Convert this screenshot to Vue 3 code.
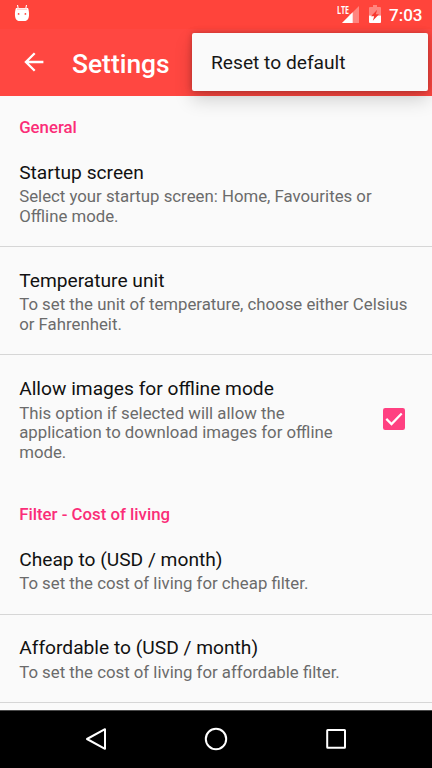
<script setup>
const groups = [
  {
    title: 'General',
    items: [
      {
        title: 'Startup screen',
        lines: ['Select your startup screen: Home, Favourites or', 'Offline mode.'],
      },
      {
        title: 'Temperature unit',
        lines: ['To set the unit of temperature, choose either Celsius', 'or Fahrenheit.'],
      },
      {
        title: 'Allow images for offline mode',
        lines: ['This option if selected will allow the', 'application to download images for offline', 'mode.'],
        checked: true,
      },
    ],
  },
  {
    title: 'Filter - Cost of living',
    items: [
      { title: 'Cheap to (USD / month)', lines: ['To set the cost of living for cheap filter.'] },
      { title: 'Affordable to (USD / month)', lines: ['To set the cost of living for affordable filter.'] },
    ],
  },
]
</script>

<template>
  <div class="screen">
    <header class="header">
      <div class="status">
        <svg class="droid" width="16" height="18" viewBox="0 0 16 18">
          <path d="M4.2 4.5L3.5 1M11.8 4.5L12.5 1" stroke="#fff" stroke-width="1.1" fill="none" />
          <path d="M2 4H14C14.8 6 15.2 8.5 15 11.5C14.8 15.3 12.8 17 10.5 17H5.5C3.2 17 1.2 15.3 1 11.5C.8 8.5 1.2 6 2 4Z" fill="#fff" />
          <path d="M3 5.2H13" stroke="#ff9a93" stroke-width=".6" />
          <circle cx="4.6" cy="9.9" r=".9" fill="#ff453d" />
          <circle cx="11.4" cy="9.9" r=".9" fill="#ff453d" />
        </svg>
        <div class="indicators">
          <div class="network">
            <span class="lte">LTE</span>
            <svg class="signal" width="17" height="17" viewBox="0 0 17 17">
              <path d="M17 0V17H0L7.5 9.5V8H9Z" fill="#fff" fill-opacity=".35" />
              <path d="M10.7 6.3V17H0Z" fill="#fff" />
            </svg>
          </div>
          <svg class="battery" width="12" height="18" viewBox="0 0 12 18">
            <path d="M4 0H8V2H11A1 1 0 0 1 12 3V10.5H0V3A1 1 0 0 1 1 2H4Z" fill="#fff" fill-opacity=".35" />
            <path d="M0 10.5H12V17A1 1 0 0 1 11 18H1A1 1 0 0 1 0 17Z" fill="#fff" />
            <path d="M8.2 4.8L2 11.3H5.2L3.8 15.7L10 9.2H6.8Z" fill="#f8382f" />
          </svg>
          <span class="time">7:03</span>
        </div>
      </div>
      <div class="toolbar">
        <svg class="back" width="20" height="20" viewBox="0 0 20 20">
          <path d="M19.4 10H2M10.7 1.2L1.9 10L10.7 18.8" fill="none" stroke="#fff" stroke-width="2.3" />
        </svg>
        <h1 class="heading">Settings</h1>
      </div>
    </header>

    <div class="menu">Reset to default</div>

    <main class="list">
      <section v-for="group in groups" :key="group.title" class="group">
        <h2 class="category">{{ group.title }}</h2>
        <div v-for="item in group.items" :key="item.title" class="item">
          <div class="copy">
            <div class="title">{{ item.title }}</div>
            <div v-for="line in item.lines" :key="line" class="summary">{{ line }}</div>
          </div>
          <svg v-if="item.checked" class="checkbox" width="22" height="22" viewBox="0 0 22 22">
            <rect width="22" height="22" rx="2.2" fill="#ff4081" />
            <path d="M3.3 10.9L8.5 16.1L18.7 5.4" fill="none" stroke="#fff" stroke-width="2.2" />
          </svg>
        </div>
      </section>
    </main>

    <nav class="navbar">
      <svg width="24" height="26" viewBox="0 0 24 26">
        <path d="M21 3.2V22.8L3 13Z" fill="none" stroke="#fff" stroke-width="2" stroke-linejoin="round" />
      </svg>
      <svg width="24" height="26" viewBox="0 0 24 26">
        <circle cx="12" cy="13" r="10.2" fill="none" stroke="#fff" stroke-width="2" />
      </svg>
      <svg width="24" height="26" viewBox="0 0 24 26">
        <rect x="3.2" y="4" width="17.8" height="17.8" rx=".5" fill="none" stroke="#fff" stroke-width="2" />
      </svg>
    </nav>
  </div>
</template>

<style>
body {
  margin: 0;
  overflow: hidden;
}
</style>

<style scoped>
.screen {
  position: relative;
  display: flex;
  flex-direction: column;
  width: 432px;
  height: 768px;
  overflow: hidden;
  background: #fafafa;
  font-family: Roboto, sans-serif;
}
.header {
  flex: none;
  height: 96px;
  background: #ff4741;
}
.status {
  display: flex;
  justify-content: space-between;
  height: 29px;
  padding: 0 9.5px 0 14px;
  background: #ff443b;
}
.droid {
  margin-top: 4px;
}
.indicators {
  display: flex;
  color: #fff;
}
.network {
  display: flex;
  margin-right: 10px;
}
.lte {
  width: 12px;
  margin: 5px -7px 0 0;
  font: bold 11px/9px "Open Sans", sans-serif;
  letter-spacing: -0.2px;
  transform: scaleX(0.65);
  transform-origin: left;
}
.signal {
  margin-top: 6px;
}
.battery {
  margin-top: 5px;
}
.time {
  margin-left: 8px;
  font-size: 17px;
  font-weight: 500;
  line-height: 30px;
}
.toolbar {
  display: flex;
  align-items: center;
  height: 67px;
  padding-left: 24px;
}
.back {
  flex: none;
  margin-bottom: 1px;
}
.heading {
  margin: 2px 0 0 28px;
  color: #fff;
  font-size: 26.4px;
  font-weight: 500;
  line-height: 32px;
}
.menu {
  position: absolute;
  top: 33px;
  left: 192px;
  box-sizing: border-box;
  width: 235.5px;
  height: 58px;
  padding-left: 19px;
  border-radius: 2px;
  background: #fafafa;
  box-shadow: 0 9px 18px rgba(0, 0, 0, 0.17), 0 0 6px rgba(0, 0, 0, 0.26);
  color: #161616;
  font-size: 19.2px;
  line-height: 60px;
}
.list {
  flex: none;
  height: 614px;
  overflow: hidden;
}
.category {
  margin: 0;
  padding: 21px 19.2px 2px;
  color: #fa2d78;
  font-size: 16.8px;
  font-weight: 500;
  line-height: 20px;
}
.item {
  display: flex;
  align-items: center;
  justify-content: space-between;
  padding: 22.7px 27.5px 19.6px 19.2px;
  border-bottom: 1px solid #d6d6d6;
}
.group:not(:last-child) .item:last-child {
  border-bottom-color: transparent;
}
.copy {
  white-space: nowrap;
}
.title {
  margin-bottom: 3px;
  color: #111;
  font-size: 19.2px;
  line-height: 22.5px;
}
.summary {
  color: #6b6b6b;
  font-size: 16.8px;
  line-height: 19.7px;
}
.checkbox {
  flex: none;
  margin-bottom: 3px;
}
.navbar {
  box-sizing: border-box;
  display: flex;
  flex: none;
  align-items: center;
  justify-content: space-between;
  height: 58px;
  padding: 0 84px 1px;
  border-top: 1px solid #4a4a4a;
  background: #000;
}
</style>
